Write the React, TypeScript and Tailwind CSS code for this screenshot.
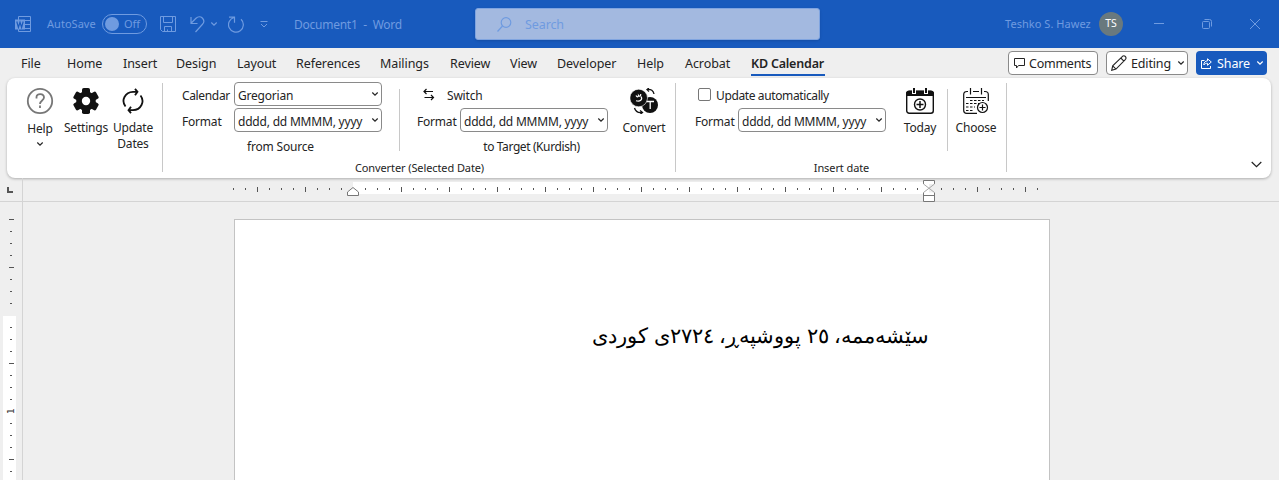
import React from "react";

const TABS: [string, string][] = [
  ["File", "w-[46px]"],
  ["Home", "w-[56px]"],
  ["Insert", "w-[53px]"],
  ["Design", "w-[61px]"],
  ["Layout", "w-[59px]"],
  ["References", "w-[84px]"],
  ["Mailings", "w-[70px]"],
  ["Review", "w-[60px]"],
  ["View", "w-[47px]"],
  ["Developer", "w-[80px]"],
  ["Help", "w-[48px]"],
  ["Acrobat", "w-[66px]"],
];

function Chevron({ className = "" }: { className?: string }) {
  return (
    <svg viewBox="0 0 8 6" className={`h-[6px] w-[8px] shrink-0 ${className}`} fill="none" stroke="currentColor" strokeWidth="1.2">
      <path d="M1.3 1.5 4 4.2 6.7 1.5" />
    </svg>
  );
}

function TitleBar() {
  return (
    <header className="flex h-12 items-center bg-[#185abd] text-[#6f9be0]">
      <svg viewBox="0 0 17 17" className="ml-[15px] h-[17px] w-[17px]" fill="none" stroke="currentColor">
        <path d="M3.5 4V.5h12v15h-12V13M9 4.5h6.500M9 8.5h6.500M9 12.5h6.500" />
        <path d="M0 3.5h10v10H0z" fill="currentColor" stroke="none" />
        <path d="M1.8 5.5 3.4 11.3 5 6.2 6.6 11.3 8.2 5.5" stroke="#185abd" strokeWidth="1.2" />
      </svg>
      <span className="ml-[15px] w-[55px] whitespace-nowrap text-[11px] tracking-[0.03px]">AutoSave</span>
      <div className="flex h-5 w-[45px] items-center rounded-full border border-[#6f9be0] pl-[2px]">
        <span className="h-[14px] w-[14px] rounded-full bg-[#6f9be0]" />
        <span className="ml-[5px] text-[11px]">Off</span>
      </div>
      <svg viewBox="0 0 16 16" className="ml-[13px] h-4 w-4" fill="none" stroke="currentColor">
        <path d="M.5.5h15v15h-13l-2-2zM3.5.5v6h9v-6M4.5 15.5v-5h7v5M7.5 15.5v-2" />
      </svg>
      <svg viewBox="0 0 15 17" className="ml-[14px] h-[17px] w-[15px]" fill="none" stroke="currentColor" strokeWidth="1.2">
        <path d="M1 1v6.5h6.5M1 7.2 6 2.3C8 .4 10.7.4 12.3 2c1.900 1.900 1.800 4.600 0 6.500L5.500 16" />
      </svg>
      <Chevron className="ml-[5px]" />
      <svg viewBox="0 0 17 17" className="ml-[10px] h-[17px] w-[17px]" fill="none" stroke="currentColor" strokeWidth="1.2">
        <path d="M1 1.200h5.500v5.500M6.200 1.500A7.400 7.400 0 1 0 13 3.300" />
      </svg>
      <svg viewBox="0 0 8 7" className="ml-[15px] h-[7px] w-2" fill="none" stroke="currentColor">
        <path d="M.5.5h7M1 3l3 3 3-3" />
      </svg>
      <div className="ml-[26px] mt-[2px] w-[181px] whitespace-pre text-[12px] tracking-[-0.25px]">Document1  -  Word</div>
      <div className="flex h-8 w-[345px] items-center rounded-[3px] border border-[#7fa4e0] bg-[#a3b9e0] pl-[21px] shadow">
        <svg viewBox="0 0 15 15" className="h-[15px] w-[15px]" fill="none" stroke="currentColor" strokeWidth="1.2">
          <circle cx="9" cy="5.500" r="4.800" />
          <path d="M5.500 9 .5 14.500" />
        </svg>
        <span className="ml-[13px] mt-[2px] text-[12.5px] tracking-[-0.1px]">Search</span>
      </div>
      <span className="ml-[185px] w-[94px] whitespace-nowrap text-[11px] tracking-[0.05px]">Teshko S. Hawez</span>
      <span className="flex h-6 w-6 items-center justify-center rounded-full bg-[#69797e] text-[10.500px] text-white">TS</span>
      <svg viewBox="0 0 10 10" className="ml-[31px] h-[10px] w-[10px]" stroke="currentColor">
        <path d="M0 4.500h10" />
      </svg>
      <svg viewBox="0 0 10 10" className="ml-[38px] h-[10px] w-[10px]" fill="none" stroke="currentColor">
        <rect x=".5" y="2.500" width="7" height="7" rx="1" />
        <path d="M2.500.5h5a2 2 0 0 1 2 2v5" />
      </svg>
      <svg viewBox="0 0 10 10" className="ml-[38px] h-[10px] w-[10px]" stroke="currentColor">
        <path d="m0 0 10 10M10 0 0 10" />
      </svg>
    </header>
  );
}

function TabRow() {
  return (
    <nav className="flex h-[30px] items-center pl-[21px] text-[12.500px] leading-[30px]">
      {TABS.map(([name, width]) => (
        <span key={name} className={`mt-px shrink-0 whitespace-nowrap tracking-[-0.08px] ${width}`}>
          {name}
        </span>
      ))}
      <span className="-mt-px h-[27px] w-[74px] shrink-0 border-b-2 border-[#185abd] whitespace-nowrap font-semibold leading-[30px] tracking-[-0.2px] text-[#242424]">
        KD Calendar
      </span>
      <div className="ml-[183px] flex h-6 w-[90px] shrink-0 items-center rounded border border-[#8a8a8a] bg-white pl-[5px]">
        <svg viewBox="0 0 11 11" className="h-[11px] w-[11px]" fill="none" stroke="currentColor">
          <path d="M.5.5h10v7H4.500L2.500 10V7.500h-2z" />
        </svg>
        <span className="ml-1 mt-px tracking-[-0.25px]">Comments</span>
      </div>
      <div className="ml-2 flex h-6 w-[82px] shrink-0 items-center rounded border border-[#8a8a8a] bg-white pl-1">
        <svg viewBox="0 0 16 16" className="h-4 w-4" fill="none" stroke="currentColor" strokeWidth="1.100">
          <path d="m.7 15.300 1-4.500L11.500 1.300c2-1.500 4.500 1 3 3L5 14.100zM9.800 3l3.100 3.100M1.700 10.800 5 14.100" />
        </svg>
        <span className="ml-1 mt-px w-[46px] tracking-[-0.15px]">Editing</span>
        <Chevron />
      </div>
      <div className="ml-2 flex h-6 w-[71px] shrink-0 items-center rounded bg-[#185abd] pl-[5px] text-white">
        <svg viewBox="0 0 11 11" className="h-[11px] w-[11px]" fill="none" stroke="currentColor">
          <path d="M3.500 2.500h-3v8h9V8M6.500.8v2C4 3 3 4.500 2.800 7 4 5.500 5 5.300 6.500 5.300v2L10.300 4z" />
        </svg>
        <span className="ml-[5px] mt-px w-[39px] tracking-[-0.1px]">Share</span>
        <Chevron />
      </div>
    </nav>
  );
}

function Combo({ value }: { value: string }) {
  return (
    <div className="flex h-6 w-[148px] shrink-0 items-center rounded-[4px] border border-[#8a8a8a] bg-white pl-[3px]">
      <span className="w-[133px] whitespace-nowrap pt-[3px]">{value}</span>
      <Chevron />
    </div>
  );
}

function Tool({ icon, label, className }: { icon: React.ReactNode; label: React.ReactNode; className: string }) {
  return (
    <div className={`flex shrink-0 flex-col items-center whitespace-nowrap text-center leading-4 ${className}`}>
      <div className="flex h-[30px] items-center">{icon}</div>
      <div className="mt-[4px]">{label}</div>
    </div>
  );
}

const HelpIcon = (
  <svg viewBox="0 0 28 28" className="h-7 w-7" fill="none" stroke="#777" strokeWidth="1.800">
    <circle cx="14" cy="14" r="12.200" />
    <path d="M10.500 11.500V10c0-4 7.500-4 7.500.5 0 3-4 3-4 6.500M14 18.500v2.500" />
  </svg>
);

const GearIcon = (
  <svg viewBox="0 0 26 26" className="h-[26px] w-[26px]">
    <g fill="#111">
      <circle cx="13" cy="13" r="9.800" />
      <rect x="9" width="8" height="26" rx="1.800" />
      <rect x="9" width="8" height="26" rx="1.800" transform="rotate(60 13 13)" />
      <rect x="9" width="8" height="26" rx="1.800" transform="rotate(120 13 13)" />
    </g>
    <circle cx="13" cy="13" r="4.200" fill="#fff" />
  </svg>
);

const RefreshIcon = (
  <svg viewBox="0 0 24 26" className="h-[26px] w-6" fill="none" stroke="#111" strokeWidth="1.800">
    <path d="M4.500 18.500C-.2 12.500 4 4 12 3.800h4.500M14 .8l2.500 3-2.500 3.500M19.500 7.500C24.200 13.500 20 22 12 22.200H7.500M10 25.200l-2.500-3 2.500-3.500" />
  </svg>
);

const ConvertIcon = (
  <svg viewBox="0 0 28 26" className="h-[26px] w-7" fill="none">
    <circle cx="20" cy="17" r="8" fill="#111" />
    <circle cx="8.700" cy="10" r="8.800" fill="#111" stroke="#fff" strokeWidth=".6" />
    <path d="M16.500 13.500h7.500M20.200 13.500v7.500" stroke="#fff" strokeWidth="1.300" />
    <path d="M6 7.500c1 2 2.500 1.500 2.500 0 1 1.500 2.500.5 2.200-1.500M11 8.500c2 3-1 5.500-5 4.200" stroke="#fff" strokeWidth="1.200" />
    <path d="M17 1.500c4-.8 6.500 1.500 7 4.500M19 0l-2 1.500 2 2M4.500 20c1 3.500 4 5 7.500 4.500M10 22.500l2.500 2-2 1.500" stroke="#111" strokeWidth="1.300" />
  </svg>
);

const TodayIcon = (
  <svg viewBox="0 0 28 26" className="h-[26px] w-7" fill="none" stroke="#111">
    <rect x=".7" y="3.500" width="26.600" height="21.800" rx="2.500" strokeWidth="1.400" />
    <path d="M.5 7.500V5q0-2 2.500-2h22q2.500 0 2.500 2v2.500z" fill="#111" />
    <path d="M8 0v6M20 0v6" stroke="#fff" strokeWidth="4" />
    <path d="M8 0v5M20 0v5" strokeWidth="2" />
    <circle cx="14" cy="16.500" r="5.500" strokeWidth="1.400" />
    <path d="M14 13v7M10.500 16.500h7" strokeWidth="1.500" />
  </svg>
);

const ChooseIcon = (
  <svg viewBox="0 0 26 26" className="h-[26px] w-[26px]" fill="none" stroke="#111" strokeWidth="1.200">
    <path d="M5 3.500H4Q.7 3.500.7 6.500v16q0 2.800 3 2.800H14M10 3.500h6M21 3.500h1q3.300 0 3.300 3V13M7.500 0v6.500M18.500 0v6.500M3 9.500h20" />
    <path d="M7 12.500h14M3 15.500h13M3 19h9M3 22.500h8" strokeDasharray="2.500 1.500" />
    <circle cx="19.500" cy="19.500" r="5" fill="#fff" />
    <path d="M19.500 16.500v6M16.500 19.500h6" />
  </svg>
);

function Ribbon() {
  return (
    <section className="mx-[7px] flex h-[100px] w-[1264px] rounded-lg bg-white pt-[5px] text-[12px] tracking-[-0.2px] shadow-[0_1px_3px_rgba(0,0,0,0.28)]">
      <div className="flex h-[89px] w-[156px] shrink-0 border-r border-[#c8c8c8] pt-[3px]">
        <Tool
          className="ml-[12px] w-[42px]"
          icon={HelpIcon}
          label={<div className="flex flex-col items-center pt-px"><span>Help</span><Chevron className="mt-[4px]" /></div>}
        />
        <Tool className="w-[50px]" icon={GearIcon} label="Settings" />
        <Tool className="w-[44px]" icon={RefreshIcon} label={<>Update<br />Dates</>} />
      </div>
      <div className="flex h-[95px] w-[513px] shrink-0 flex-col">
        <div className="flex h-[76px]">
          <div className="flex w-[236px] flex-col pl-[19px] leading-[18px]">
            <div className="-mt-px flex h-6 items-center">
              <span className="w-[52px] pt-[3px] tracking-[-0.35px]">Calendar</span>
              <Combo value="Gregorian" />
            </div>
            <div className="mt-[2px] flex h-6 items-center">
              <span className="w-[52px] pt-[3px]">Format</span>
              <Combo value="dddd, dd MMMM, yyyy" />
            </div>
            <div className="mt-[6px] w-[197px] text-center">from Source</div>
          </div>
          <div className="mt-[6px] h-[62px] w-px bg-[#c8c8c8]" />
          <div className="flex w-[208px] flex-col pl-[17px] leading-[18px]">
            <div className="-mt-px flex h-6 items-center">
              <svg viewBox="0 0 12 13" className="ml-[6px] h-[13px] w-3" fill="none" stroke="#111" strokeWidth="1.200">
                <path d="M10 3.500H1M3.500 1 1 3.500 3.500 6M1.500 9.500h9M8 7l2.500 2.500L8 12" />
              </svg>
              <span className="ml-3 pt-[3px]">Switch</span>
            </div>
            <div className="mt-[2px] flex h-6 items-center">
              <span className="w-[43px] shrink-0 pt-[3px]">Format</span>
              <Combo value="dddd, dd MMMM, yyyy" />
            </div>
            <div className="mt-[6px] w-[229px] text-center tracking-[-0.4px]">to Target (Kurdish)</div>
          </div>
          <Tool className="ml-[10px] w-[52px] pt-[3px]" icon={ConvertIcon} label="Convert" />
        </div>
        <div className="text-center text-[11px] leading-[18px] tracking-[-0.1px]">Converter (Selected Date)</div>
      </div>
      <div className="-ml-px h-[89px] w-px shrink-0 bg-[#c8c8c8]" />
      <div className="flex h-[95px] w-[330px] shrink-0 flex-col">
        <div className="flex h-[76px]">
          <div className="flex w-[214px] shrink-0 flex-col pl-[19px] leading-[18px]">
            <div className="-mt-px flex h-6 items-center">
              <span className="ml-[3px] h-[13px] w-[13px] rounded-[2px] border border-[#777] bg-white" />
              <span className="ml-[5px] whitespace-nowrap pt-[3px] tracking-[-0.38px]">Update automatically</span>
            </div>
            <div className="mt-[2px] flex h-6 items-center">
              <span className="w-[43px] shrink-0 pt-[3px]">Format</span>
              <Combo value="dddd, dd MMMM, yyyy" />
            </div>
          </div>
          <Tool className="ml-[8px] w-[44px] pt-[3px]" icon={TodayIcon} label="Today" />
          <div className="ml-[5px] mt-[6px] h-[62px] w-px bg-[#c8c8c8]" />
          <Tool className="ml-[4px] w-[48px] pt-[3px]" icon={ChooseIcon} label="Choose" />
        </div>
        <div className="pl-px text-center text-[11px] leading-[18px] tracking-[-0.1px]">Insert date</div>
      </div>
      <div className="h-[89px] w-px shrink-0 bg-[#c8c8c8]" />
      <svg viewBox="0 0 11 7" className="ml-auto mr-[9px] mt-[78px] h-[7px] w-[11px]" fill="none" stroke="#222" strokeWidth="1.200">
        <path d="m.7 1 4.800 4.700L10.300 1" />
      </svg>
    </section>
  );
}

function HorizontalRuler() {
  const ticks = Array.from({ length: 68 }, (_, i) => 233 + i * 12).filter((x) => x !== 353 && x !== 929);
  return (
    <div className="flex h-6 border-b border-[#d4d4d4]">
      <svg viewBox="0 0 1279 23" className="h-[23px] w-[1279px]" shapeRendering="crispEdges">
        <path d="M8 9v5h5" fill="none" stroke="#555" strokeWidth="2" />
        <path d="M22 0h1v23h-1z" fill="#d4d4d4" />
        <path d="M353 4h576v12H353z" fill="#fff" />
        {ticks.map((x) => {
          const major = (x - 257) % 48 === 0;
          return <rect key={x} x={x} y={major ? 9 : 10} width="1" height={major ? 5 : 2} fill="#555" />;
        })}
      </svg>
    </div>
  );
}

function RulerMarkers() {
  return (
    <svg viewBox="0 0 600 24" className="absolute left-[340px] top-[179px] h-6 w-[600px]" fill="#fff" stroke="#777">
      <path d="M7.500 16.500v-3.500l5.500-4.500 5.500 4.500v3.500z" />
      <path d="M583.500 5V1.500h11V5" />
      <path d="M583.500 13.500v9h11v-9M583.500 16.500h11" />
      <path d="m583.500 5 11 8.500M594.500 5l-11 8.500" stroke="#a8a8a8" />
    </svg>
  );
}

function VerticalRuler() {
  const ticks = Array.from({ length: 22 }, (_, i) => 17 + i * 12).filter((y) => y !== 113 && y !== 209);
  return (
    <svg viewBox="0 0 23 278" className="h-[278px] w-[23px] shrink-0" shapeRendering="crispEdges">
      <path d="M3 114h13v164H3z" fill="#fff" />
      <path d="M22 0h1v278h-1z" fill="#d4d4d4" />
      {ticks.map((y) => {
        const major = (y - 17) % 48 === 0;
        return <rect key={y} x={major ? 9 : 10} y={y} width={major ? 5 : 2} height="1" fill="#555" />;
      })}
      <text x="0" y="0" transform="translate(14 212) rotate(-90)" fontSize="9" fontFamily="DejaVu Sans" fill="#333">1</text>
    </svg>
  );
}

export default function App() {
  return (
    <div className="relative h-[480px] w-[1279px] overflow-hidden bg-[#efefef] font-['Noto_Sans',sans-serif] text-[#242424]">
      <TitleBar />
      <TabRow />
      <Ribbon />
      <HorizontalRuler />
      <RulerMarkers />
      <main className="flex h-[278px]">
        <VerticalRuler />
        <article dir="rtl" lang="ckb" className="ml-[211px] mt-[17px] h-[270px] w-[816px] border border-[#c3c3c3] bg-white pr-[120px] pt-[96px] text-[21px] leading-[38px] text-black">
          سێشەممە، ٢٥ پووشپەڕ، ٢٧٢٤ی کوردی
        </article>
      </main>
    </div>
  );
}
